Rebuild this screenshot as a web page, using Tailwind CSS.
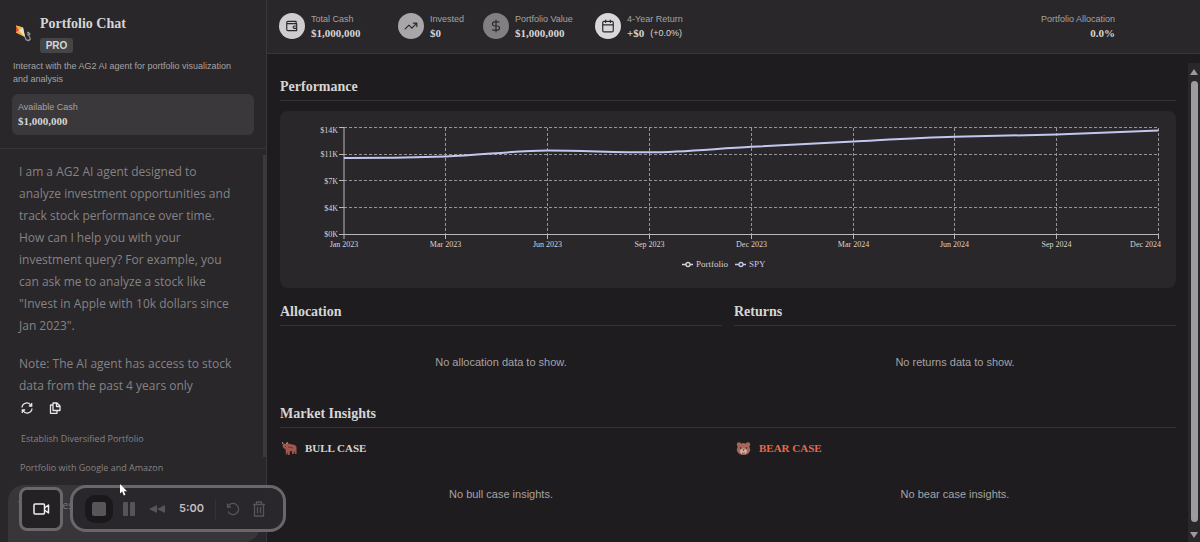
<!DOCTYPE html>
<html lang="en">
<head>
<meta charset="utf-8">
<meta name="viewport" content="width=device-width, initial-scale=1">
<title>Portfolio Chat</title>
<script src="https://cdn.jsdelivr.net/npm/@tailwindcss/browser@4"></script>
</head>
<body class="bg-[#1e1c1e] font-['Liberation_Sans',sans-serif] text-[#d6d5d6]">
<div class="relative flex h-screen min-h-[480px] overflow-hidden">

  <!-- Chat sidebar -->
  <aside class="flex w-[267px] shrink-0 flex-col border-r border-[#39373a] bg-[#292729]">
    <header class="border-b border-[#363437] px-3 pt-3.5 pb-[13px]">
      <div class="flex items-center gap-2">
        <svg class="h-5 w-5 shrink-0" viewBox="0 0 20 20" aria-hidden="true">
          <path d="M4 1.500 11 3.500 13 13 4 8.500Z" fill="#e9d9b4"/>
          <path d="M4 1.500 11 3.500 7 6.500Z" fill="#eeb92b"/>
          <path d="M4 1.500 7 6.500 4 8.500Z" fill="#dc4c3c"/>
          <path d="M4 8.500 7 6.500 13 13Z" fill="#f0a92c"/>
          <path d="M7 6.500 11 3.500 13 13Z" fill="#e4ded0"/>
          <path d="M13 13c1 5 5.500 4 5 1s-3.500-3-1.500-6" fill="none" stroke="#858992" stroke-width="1.300"/>
          <path d="m15 8 3 1.500M15.500 11l3-1M16 16.500l2.500-1" stroke="#a9aaae" stroke-width="1"/>
        </svg>
        <div>
          <h1 class="font-['Liberation_Serif',serif] text-sm leading-5 font-bold">Portfolio Chat</h1>
          <span class="mt-1 flex h-[15px] w-[33px] items-center justify-center rounded-[3px] bg-[#454446] text-[10px] font-bold">PRO</span>
        </div>
      </div>
      <p class="mt-[7px] pl-px text-[9px] leading-[13px] text-[#a5a3a5]">Interact with the AG2 AI agent for portfolio visualization<br>and analysis</p>
      <div class="mt-2 rounded-md bg-[#3a383b] px-1.5 pt-1.5 pb-[7px]">
        <div class="text-[9px] leading-[14px] text-[#a5a3a5]">Available Cash</div>
        <div class="font-['Liberation_Serif',serif] text-[11px] leading-[14px] font-bold">$1,000,000</div>
      </div>
    </header>
    <div class="flex min-h-0 flex-1">
      <div class="flex-1 pt-3 pl-[19px] font-['Open_Sans',sans-serif]">
        <div class="text-[12px] leading-[22px] text-[#858385]">
          <p>I am a AG2 AI agent designed to<br>analyze investment opportunities and<br>track stock performance over time.<br>How can I help you with your<br>investment query? For example, you<br>can ask me to analyze a stock like<br>"Invest in Apple with 10k dollars since<br>Jan 2023".</p>
          <p class="mt-4">Note: The AI agent has access to stock<br>data from the past 4 years only</p>
        </div>
        <div class="mt-[5px] flex gap-4 pl-0.5 text-[#e8e7e8]">
          <button type="button" aria-label="Regenerate" class="block">
            <svg class="h-3 w-3" viewBox="0 0 12 12" fill="none" stroke="currentColor" stroke-width="1.300"><path d="M1 5.500A4.800 4.800 0 0 1 10 3.500M10.700 1v3H7.800M11 6.500A4.800 4.800 0 0 1 2 8.500M1.300 11V8H4.200"/></svg>
          </button>
          <button type="button" aria-label="Copy" class="block">
            <svg class="h-3 w-3" viewBox="0 0 12 12" fill="none" stroke="currentColor" stroke-width="1.300" stroke-linejoin="round"><path d="M4 1h4l3 3v4.500H4ZM7.500 1v3.500H11M4 3H1.500v8.300H8V9"/></svg>
          </button>
        </div>
        <div class="mt-[17px] flex flex-col items-start gap-[13px] text-[9px] leading-4 text-[#858385]">
          <button type="button" class="px-0.5">Establish Diversified Portfolio</button>
          <button type="button" class="px-px">Portfolio with Google and Amazon</button>
        </div>
      </div>
      <div class="mt-1.5 h-[302px] w-[3px] bg-[#3b393c]"></div>
    </div>
  </aside>

  <!-- Dashboard -->
  <main class="flex min-w-0 flex-1 flex-col">
    <header class="flex h-[54px] shrink-0 items-start border-b border-[#39373a] bg-[#292729] pt-3 pr-[85px] pl-3 text-[9px] leading-[14px]">
      <div class="grid grid-cols-[119px_85px_112px_auto]">
        <div class="flex items-center gap-1.5">
          <span class="flex h-[26px] w-[26px] shrink-0 items-center justify-center rounded-full bg-[#cfcdd0] text-[#2a282b]"><svg class="h-3.5 w-3.5" viewBox="0 0 24 24" fill="none" stroke="currentColor" stroke-width="2" stroke-linejoin="round"><path d="M19 7V4H5a2 2 0 0 0 0 4h15v12H5a2 2 0 0 1-2-2V6M20 12h-4a2 2 0 0 0 0 4h4Z"/></svg></span>
          <div><div class="text-[#a5a3a5]">Total Cash</div><div class="font-['Liberation_Serif',serif] text-[11px] font-bold">$1,000,000</div></div>
        </div>
        <div class="flex items-center gap-1.5">
          <span class="flex h-[26px] w-[26px] shrink-0 items-center justify-center rounded-full bg-[#a8a6a9] text-[#2a282b]"><svg class="h-3.5 w-3.5" viewBox="0 0 24 24" fill="none" stroke="currentColor" stroke-width="2" stroke-linecap="round" stroke-linejoin="round"><path d="m2 17 6.500-6.500 5 5L22 7M16 7h6v6"/></svg></span>
          <div><div class="text-[#a5a3a5]">Invested</div><div class="font-['Liberation_Serif',serif] text-[11px] font-bold">$0</div></div>
        </div>
        <div class="flex items-center gap-1.5">
          <span class="flex h-[26px] w-[26px] shrink-0 items-center justify-center rounded-full bg-[#817f82] text-[#2a282b]"><svg class="h-3.5 w-3.5" viewBox="0 0 24 24" fill="none" stroke="currentColor" stroke-width="2" stroke-linecap="round"><path d="M12 2v20M17 5H9.500a3.500 3.500 0 0 0 0 7h5a3.500 3.500 0 0 1 0 7H6"/></svg></span>
          <div><div class="text-[#a5a3a5]">Portfolio Value</div><div class="font-['Liberation_Serif',serif] text-[11px] font-bold">$1,000,000</div></div>
        </div>
        <div class="flex items-center gap-1.5">
          <span class="flex h-[26px] w-[26px] shrink-0 items-center justify-center rounded-full bg-[#d9d7da] text-[#2a282b]"><svg class="h-3.5 w-3.5" viewBox="0 0 24 24" fill="none" stroke="currentColor" stroke-width="2" stroke-linecap="round"><rect x="3" y="4" width="18" height="18" rx="2"/><path d="M8 2v4M16 2v4M3 10h18"/></svg></span>
          <div><div class="text-[#a5a3a5]">4-Year Return</div><div class="flex gap-1.5"><span class="font-['Liberation_Serif',serif] text-[11px] font-bold">+$0</span><span>(+0.0%)</span></div></div>
        </div>
      </div>
      <div class="ml-auto text-right"><div class="text-[#a5a3a5]">Portfolio Allocation</div><div class="font-['Liberation_Serif',serif] text-[11px] font-bold">0.0%</div></div>
    </header>

    <div class="flex min-h-0 flex-1">
      <div class="min-w-0 flex-1 overflow-hidden pt-[23px] pr-3 pl-[13px]">
        <section>
          <h2 class="border-b border-[#353336] pb-[3px] font-['Liberation_Serif',serif] text-sm leading-5 font-bold">Performance</h2>
          <div class="mt-2.5 rounded-lg bg-[#292729]">
            <svg class="block w-full" viewBox="0 0 896 177" role="img" aria-label="Portfolio and SPY performance" font-family="Liberation Serif, serif" font-size="8" fill="#d6d5d6">
              <g stroke="#969496" stroke-width="1" stroke-dasharray="3 2" fill="none">
                <path d="M64 16.500H879M64 43.500H879M64 69.500H879M64 96.500H879"/>
                <path d="M165.500 17V123M267.500 17V123M369.500 17V123M471.500 17V123M573.500 17V123M674.500 17V123M776.500 17V123M878.500 17V123"/>
              </g>
              <path d="M64 16V128M59 16.500h5M59 43.500h5M59 69.500h5M59 96.500h5M59 123.500H879M165.500 123v5M267.500 123v5M369.500 123v5M471.500 123v5M573.500 123v5M674.500 123v5M776.500 123v5M878.500 123v5" stroke="#b9b7b9" fill="none"/>
              <path d="M64 47C98 47 132 46.500 165.500 45.500C200 44.500 233 39.500 267.500 39.500C301 39.500 335 41.300 369.500 41.300C403 41.300 437 37.500 471.500 35.800L573.500 30.500C607 28.800 640 26.800 674.500 25.800L776.500 23.500L878.500 19.500" fill="none" stroke="#c3c7f0" stroke-width="2"/>
              <g text-anchor="end"><text x="58" y="22">$14K</text><text x="58" y="46">$11K</text><text x="58" y="73">$7K</text><text x="58" y="100">$4K</text><text x="58" y="126">$0K</text><text x="881" y="136">Dec 2024</text></g>
              <g text-anchor="middle"><text x="64" y="136">Jan 2023</text><text x="165.500" y="136">Mar 2023</text><text x="267.500" y="136">Jun 2023</text><text x="369.500" y="136">Sep 2023</text><text x="471.500" y="136">Dec 2023</text><text x="573.500" y="136">Mar 2024</text><text x="674.500" y="136">Jun 2024</text><text x="776.500" y="136">Sep 2024</text></g>
              <g fill="none" stroke-width="1.300"><g stroke="#d6d5d6"><path d="M402 153.500h4M410 153.500h3"/><circle cx="408" cy="153.500" r="2"/></g><g stroke="#c3c7f0"><path d="M455 153.500h4M463 153.500h3"/><circle cx="461" cy="153.500" r="2"/></g></g>
              <g font-size="9"><text x="416" y="156">Portfolio</text><text x="469" y="156" fill="#c3c7f0">SPY</text></g>
            </svg>
          </div>
        </section>

        <div class="mt-3.5 grid grid-cols-2 gap-3">
          <section>
            <h2 class="border-b border-[#353336] pb-[3px] font-['Liberation_Serif',serif] text-sm leading-5 font-bold">Allocation</h2>
            <p class="py-7 text-center text-[11px] leading-4 text-[#a5a3a5]">No allocation data to show.</p>
          </section>
          <section>
            <h2 class="border-b border-[#353336] pb-[3px] font-['Liberation_Serif',serif] text-sm leading-5 font-bold">Returns</h2>
            <p class="py-7 text-center text-[11px] leading-4 text-[#a5a3a5]">No returns data to show.</p>
          </section>
        </div>

        <section class="mt-1.5">
          <h2 class="border-b border-[#353336] pb-[3px] font-['Liberation_Serif',serif] text-sm leading-5 font-bold">Market Insights</h2>
          <div class="mt-2.5 grid grid-cols-2 gap-3">
            <div>
              <h3 class="flex items-center gap-2 pl-0.5 font-['Liberation_Serif',serif] text-[11px] leading-5 font-bold">
                <svg class="h-[15px] w-[15px]" viewBox="0 0 15 15" aria-hidden="true"><path d="M1 2.500 3 3 5 2l3 1 5 1 1.500 2v7h-1.300l-.7-3-.8 3h-1.500l-.4-3H8l-.4 4H6L5.500 10.500l-.3 3H4L3.500 8 2 7.500.5 5.500Z" fill="#a0574e"/><path d="m1 3-.7-1.800M4.500 3l1-2" stroke="#c9bdb4" stroke-width=".9"/><path d="M3 5.500h1M6 6l5 1" stroke="#6b3833"/></svg>
                BULL CASE
              </h3>
              <p class="py-7 text-center text-[11px] leading-4 text-[#a5a3a5]">No bull case insights.</p>
            </div>
            <div>
              <h3 class="flex items-center gap-2 pl-0.5 font-['Liberation_Serif',serif] text-[11px] leading-5 font-bold text-[#e9684a]">
                <svg class="h-[15px] w-[15px]" viewBox="0 0 15 15" aria-hidden="true"><circle cx="3" cy="3.500" r="2.200" fill="#a76758"/><circle cx="12" cy="3.500" r="2.200" fill="#a76758"/><path d="M2 4.500Q7.500-.5 13 4.500L14.300 9Q13 14 7.500 14T.7 9Z" fill="#a76758"/><ellipse cx="7.500" cy="10.300" rx="3.300" ry="2.800" fill="#d4b5a5"/><circle cx="4.600" cy="7" r=".8" fill="#352326"/><circle cx="10.400" cy="7" r=".8" fill="#352326"/><path d="M6.200 8.500h2.600L7.500 10Z" fill="#352326"/><path d="M6 11.800q1.500 1 3 0" fill="none" stroke="#352326" stroke-width=".7"/></svg>
                BEAR CASE
              </h3>
              <p class="py-7 text-center text-[11px] leading-4 text-[#a5a3a5]">No bear case insights.</p>
            </div>
          </div>
        </section>
      </div>
      <div class="mt-[9px] flex w-3 shrink-0 flex-col items-center gap-1.5 bg-[#292729] pt-1.5 pb-1" aria-hidden="true">
        <svg class="h-1.5 w-2" viewBox="0 0 8 6"><path d="M4 0 8 6H0Z" fill="#9e9a9f"/></svg>
        <div class="mb-1 w-[7px] flex-1 rounded-full bg-[#9e9a9f]"></div>
        <svg class="h-1.5 w-2" viewBox="0 0 8 6"><path d="M0 0H8L4 6Z" fill="#9e9a9f"/></svg>
      </div>
    </div>
  </main>

  <!-- Floating chat input, recorder controls and pointer -->
  <div class="absolute bottom-0 left-2 h-[57px] w-[252px] rounded-t-2xl rounded-br-2xl bg-[#383639] pt-3 pl-2.5 font-['Open_Sans',sans-serif] text-[10px] leading-4 text-[#777578]">
    <span class="flex justify-between pr-[187px]"><span>T</span><span>es</span></span>
  </div>
  <div class="absolute bottom-2.5 left-[19px] flex items-center gap-[7px]">
    <button type="button" aria-label="Camera" class="flex h-11 w-11 items-center justify-center rounded-lg border-[3px] border-[#69676b] bg-[#232124]">
      <svg class="h-4 w-[17px]" viewBox="0 0 17 16" fill="none" stroke="#f0eff0" stroke-width="1.500" stroke-linejoin="round"><rect x="1" y="3" width="10.500" height="10" rx="1"/><path d="m11.500 7 4-3v8l-4-3"/></svg>
    </button>
    <div class="flex h-[47px] w-[216px] items-center rounded-2xl border-[3px] border-[#69676b] bg-[#29272c] pl-3 text-[#56545a]">
      <button type="button" aria-label="Stop" class="flex h-7 w-7 items-center justify-center rounded-[10px] bg-[#1a181b]"><span class="h-3.5 w-3.5 rounded-xs bg-[#575559]"></span></button>
      <button type="button" aria-label="Pause" class="ml-2.5 flex gap-0.5"><span class="h-3.5 w-[5px] rounded-[1px] bg-current"></span><span class="h-3.5 w-[5px] rounded-[1px] bg-current"></span></button>
      <button type="button" aria-label="Rewind" class="ml-3.5"><svg class="h-2.5 w-4" viewBox="0 0 16 10" fill="currentColor"><path d="M8 1v8L0 5ZM16 1v8L8 5Z"/></svg></button>
      <span class="ml-3.5 w-[26px] font-['Inter',sans-serif] text-[11px] font-semibold whitespace-nowrap text-[#c1bfc3]">5:00</span>
      <span class="ml-2.5 h-5 w-px bg-[#343237]"></span>
      <button type="button" aria-label="Restart" class="ml-2.5"><svg class="h-3.5 w-3.5" viewBox="0 0 14 14" fill="none" stroke="currentColor" stroke-width="1.300"><path d="M1.500 1.500V5H5M1.800 5A5.600 5.600 0 1 1 2 9.500"/></svg></button>
      <button type="button" aria-label="Delete" class="ml-3"><svg class="h-4 w-3.5" viewBox="0 0 14 16" fill="none" stroke="currentColor" stroke-width="1.300"><path d="M1 3.500h12M4.500 3V1h5v2M2.500 3.500V15h9V3.500M5.500 6v6.500M8.500 6v6.500"/></svg></button>
    </div>
  </div>
  <svg class="absolute bottom-[46px] left-[119px] h-3 w-2" viewBox="0 0 8 12" aria-hidden="true"><path d="M1 0v9.500l2.200-2 1.600 4 1.700-.8-1.700-3.500H8Z" fill="#fff"/></svg>
</div>
</body>
</html>
